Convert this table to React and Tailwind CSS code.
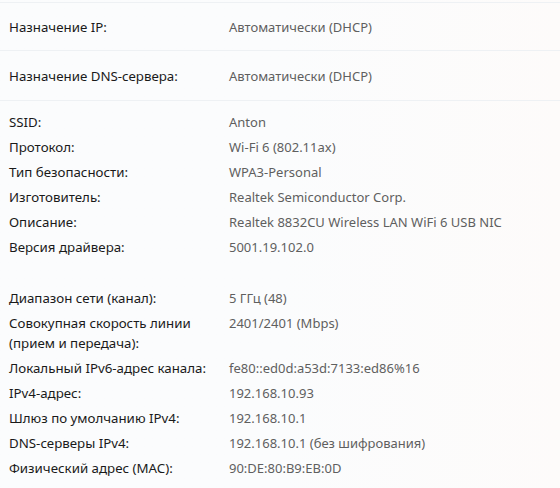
export default function App() {
  const group1 = [
    ["SSID:", "Anton"],
    ["Протокол:", "Wi-Fi 6 (802.11ax)"],
    ["Тип безопасности:", "WPA3-Personal"],
    ["Изготовитель:", "Realtek Semiconductor Corp."],
    ["Описание:", "Realtek 8832CU Wireless LAN WiFi 6 USB NIC"],
    ["Версия драйвера:", "5001.19.102.0"],
  ];
  const group2 = [
    ["Диапазон сети (канал):", "5 ГГц (48)"],
    ["Совокупная скорость линии\n(прием и передача):", "2401/2401 (Mbps)"],
    ["Локальный IPv6-адрес канала:", "fe80::ed0d:a53d:7133:ed86%16"],
    ["IPv4-адрес:", "192.168.10.93"],
    ["Шлюз по умолчанию IPv4:", "192.168.10.1"],
    ["DNS-серверы IPv4:", "192.168.10.1 (без шифрования)"],
    ["Физический адрес (MAC):", "90:DE:80:B9:EB:0D"],
  ];
  const Row = ({ label, value }) => (
    <div className="flex">
      <div className="w-[220px] shrink-0 whitespace-pre-line text-[13.3px] text-[#1a1a1a]">{label}</div>
      <div className="text-[13px] text-[#5f5f5f]">{value}</div>
    </div>
  );
  return (
    <div
      className="w-[560px] h-[488px] overflow-hidden bg-gradient-to-r from-[#fbfcfd] via-[#fbfcfd] to-[#fdfbfa] leading-[20px] pt-[2px]"
      style={{ fontFamily: '"Noto Sans", "Open Sans", sans-serif' }}
    >
      <div className="border-t border-b border-[#eef1f4] h-[49px] flex items-center pl-[9px]">
        <Row label="Назначение IP:" value="Автоматически (DHCP)" />
      </div>
      <div className="border-b border-[#eef1f4] h-[50px] flex items-center pl-[9px]">
        <Row label="Назначение DNS-сервера:" value="Автоматически (DHCP)" />
      </div>
      <div className="pl-[9px] pt-[11px] flex flex-col gap-[5px]">
        {group1.map(([l, v]) => (
          <Row key={l} label={l} value={v} />
        ))}
      </div>
      <div className="pl-[9px] pt-[31px] flex flex-col gap-[5px]">
        {group2.map(([l, v]) => (
          <Row key={l} label={l} value={v} />
        ))}
      </div>
    </div>
  );
}
